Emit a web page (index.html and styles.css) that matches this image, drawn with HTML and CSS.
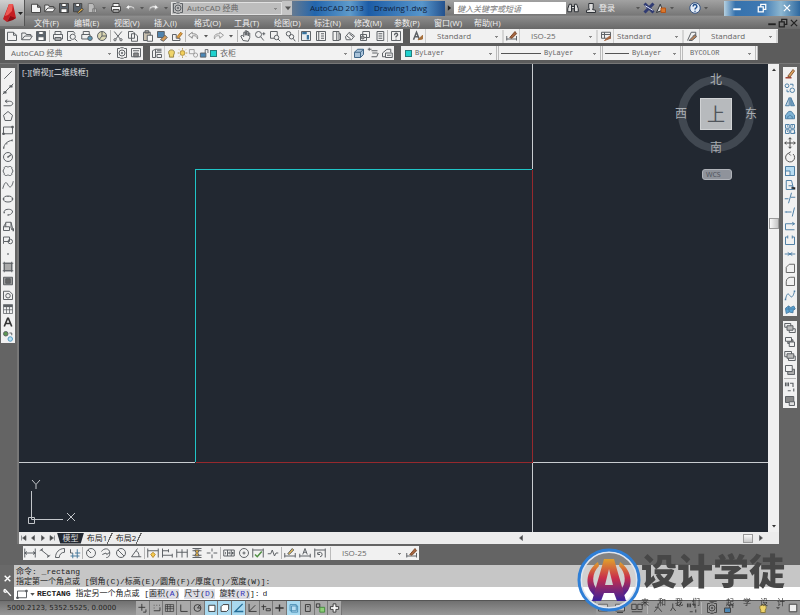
FILE: index.html
```html
<!DOCTYPE html>
<html lang="zh-CN">
<head>
    <meta charset="UTF-8">
    <meta name="viewport" content="width=device-width, initial-scale=1.0">
    <title>AutoCAD 2013 - Drawing1.dwg</title>
    <link rel="stylesheet" href="styles.css">
</head>
<body>
    <header class="app-header">
        <button class="app-button" aria-label="应用程序菜单">
            <svg viewBox="0 0 25 25">
                <path d="M3 18 L9 3 L13 3 L16 17 L11 19 L10 15 L7 21 Z" fill="#c41d22"/>
                <path d="M9 3 L13 3 L12 10 L8 14 L5 15 Z" fill="#ee5a55"/>
                <path d="M7 21 L10 15 L16 17 L13 19 Z" fill="#8e0d14"/>
                <path d="M18 11h5l-2.500 3z" fill="#222"/>
            </svg>
        </button>
        <div class="title-bar">
            <div class="tools quick" data-icons="new open save saveas sheet caret plot undo caret redo caret"></div>
            <div class="combo workspace-combo">
                <i data-icon="gear"></i>
                <select aria-label="工作空间"><option>AutoCAD 经典</option></select>
            </div>
            <button class="more" aria-label="自定义"><i data-icon="caret"></i></button>
            <h1><span>AutoCAD 2013</span><span>Drawing1.dwg</span></h1>
            <i class="expand" data-icon="play"></i>
            <input class="search" type="text" aria-label="搜索" placeholder="键入关键字或短语">
            <div class="tools account" data-icons="find user"></div>
            <button class="login">登录</button>
            <div class="tools info" data-icons="caret exchange share caret gap help caret"></div>
            <div class="window-buttons" data-icons="min restore close"></div>
        </div>
        <nav class="menu-bar">
            <a href="#">文件(F)</a>
            <a href="#">编辑(E)</a>
            <a href="#">视图(V)</a>
            <a href="#">插入(I)</a>
            <a href="#">格式(O)</a>
            <a href="#">工具(T)</a>
            <a href="#">绘图(D)</a>
            <a href="#">标注(N)</a>
            <a href="#">修改(M)</a>
            <a href="#">参数(P)</a>
            <a href="#">窗口(W)</a>
            <a href="#">帮助(H)</a>
            <div class="doc-buttons" data-icons="min restore close"></div>
        </nav>
    </header>

    <div class="toolbar-row">
        <div class="toolbar tools standard" data-icons="new open save | plot preview publish globe | cut copy paste match block | undo caret redo caret | pan zoom zoomwin zoomprev | props center palette sheets markup calc | help2"></div>
        <div class="toolbar styles">
            <i data-icon="textstyle"></i>
            <select class="wide" aria-label="文字样式"><option>Standard</option></select>
            <i data-icon="dimstyle"></i>
            <select class="wide" aria-label="标注样式"><option>ISO-25</option></select>
            <i data-icon="tablestyle"></i>
            <select aria-label="表格样式"><option>Standard</option></select>
            <i data-icon="leader"></i>
            <select class="wide" aria-label="多重引线样式"><option>Standard</option></select>
        </div>
    </div>

    <div class="toolbar-row">
        <div class="toolbar workspaces">
            <select aria-label="工作空间"><option>AutoCAD 经典</option></select>
            <div class="tools" data-icons="gear wsave"></div>
        </div>
        <div class="toolbar layers">
            <div class="tools" data-icons="layers"></div>
            <div class="combo">
                <i data-icon="bulb"></i><i data-icon="sun"></i><i data-icon="freeze"></i><i data-icon="lock"></i><b class="swatch"></b>
                <select aria-label="图层"><option>衣柜</option></select>
            </div>
            <div class="tools" data-icons="laycur layprev laystate"></div>
        </div>
        <div class="toolbar properties">
            <div class="combo color"><b class="swatch"></b><select aria-label="颜色"><option>ByLayer</option></select></div>
            <div class="combo linetype"><hr><select aria-label="线型"><option>ByLayer</option></select></div>
            <div class="combo weight"><hr><select aria-label="线宽"><option>ByLayer</option></select></div>
            <div class="combo plotstyle"><select aria-label="打印样式"><option>BYCOLOR</option></select></div>
        </div>
    </div>

    <main>
        <aside class="side-left">
            <div class="toolbar-v draw" data-icons="line xline pline polygon rect arc circle cloud spline ellipse earc insert mkblock point hatch gradient region table text addsel"></div>
        </aside>
        <section class="document">
            <div class="canvas">
                <svg class="drawing" viewBox="0 0 749 468" preserveAspectRatio="xMidYMid slice" shape-rendering="crispEdges" fill="none">
                    <path d="M513.500 0V105M513.500 399V468M0 398.500H176M514 398.500H749" stroke="#c9ccd0"/>
                    <path d="M513 105.500H176.500V398" stroke="#20c4c6"/>
                    <path d="M513.500 106V398.500H177" stroke="#96292d"/>
                </svg>
                <button class="view-label">[-][俯视][二维线框]</button>
                <div class="view-cube">
                    <span class="north">北</span>
                    <span class="west">西</span>
                    <button class="face">上</button>
                    <span class="east">东</span>
                    <span class="south">南</span>
                </div>
                <button class="wcs">WCS</button>
                <svg class="ucs" viewBox="0 0 50 50" fill="none" stroke="#c3c6ca">
                    <path d="M4.500 14V42.500H36M1.500 40.500h6v6h-6z"/>
                    <path d="M5 3l4 4.500l4-4.500M9 7.500V12M40 36l8 8M48 36l-8 8"/>
                </svg>
            </div>
            <div class="scroll-v"><i data-icon="up"></i><b></b><i data-icon="down"></i></div>
            <div class="tabs">
                <div class="tools" data-icons="first prev next last"></div>
                <button class="tab active">模型</button>
                <button class="tab">布局1</button>
                <button class="tab">布局2</button>
                <div class="scroll-h"><i data-icon="prev"></i><b></b><i data-icon="next"></i></div>
            </div>
        </section>
        <aside class="side-right">
            <div class="toolbar-v modify" data-icons="erase dup mirror offset array move rotate scale stretch trim extend breakpt break join chamfer fillet blend explode"></div>
            <div class="toolbar-v order" data-icons="front back above under | textfront hatchback"></div>
        </aside>
    </main>

    <div class="toolbar-row dim-row">
        <div class="toolbar dimension">
            <div class="tools" data-icons="dlin dalign darc dord | drad djog ddia dang | dquick dbase dcont dspace dbreak | dtol dcenter dinsp djogl | dedit dtedit dupd"></div>
            <select class="wide" aria-label="标注样式"><option>ISO-25</option></select>
            <div class="tools" data-icons="dimstyle"></div>
        </div>
    </div>

    <section class="command">
        <div class="command-handle" data-icons="close wrench"></div>
        <div class="command-body">
            <p>命令: _rectang</p>
            <p>指定第一个角点或 [倒角(C)/标高(E)/圆角(F)/厚度(T)/宽度(W)]:</p>
            <div class="command-line">
                <i data-icon="rect"></i><i data-icon="caret"></i>
                <label for="commandInput"><strong>RECTANG</strong> 指定另一个角点或 [<button>面积(<em>A</em>)</button> <button>尺寸(<em>D</em>)</button> <button>旋转(<em>R</em>)</button>]:</label>
                <input id="commandInput" type="text" value="d">
            </div>
        </div>
    </section>

    <footer>
        <span class="coords">5000.2123, 5352.5525, 0.0000</span>
        <div class="toggles" data-icons="infer snap grid ortho polar osnap osnap3d otrack ducs dyn lwt tpy qp sc am"></div>
        <div class="status-right" data-icons="model layout1 layout2 | annoscale annovis textfront | gear lock freeze bulb caret clean"></div>
    </footer>

    <div class="brand">
        <svg viewBox="0 0 64 64">
            <defs>
                <linearGradient id="brandFill" x1="0" y1="0" x2="0" y2="1">
                    <stop offset="0" stop-color="#e0a12c"/>
                    <stop offset=".45" stop-color="#c92f4b"/>
                    <stop offset="1" stop-color="#39209b"/>
                </linearGradient>
            </defs>
            <circle cx="32" cy="32" r="28" fill="#fff" fill-opacity=".2" stroke="#dfe5ef" stroke-width="2"/>
            <circle cx="32" cy="32" r="30" fill="none" stroke="#2f7fd6" stroke-width="3"/>
            <path d="M21 14C8 23 7 40 18 48L21 42C14 36 15 25 22 18ZM43 14C56 23 57 40 46 48L43 42C50 36 49 25 42 18Z" fill="url(#brandFill)"/>
            <path fill-rule="evenodd" d="M27 11H37L49 53H40L37 45H27L24 53H15ZM32 21L28 37H36Z" fill="url(#brandFill)"/>
        </svg>
        <div class="brand-text">
            <strong>设计学徒</strong>
            <p><span>来</span><span>和</span><span>我</span><span>们</span><span>一</span><span>起</span><span>学</span><span>设</span><span>计</span></p>
        </div>
    </div>

    <script src="icons.js"></script>
</body>
</html>
```

FILE: styles.css
```css
*, *::before, *::after {
    box-sizing: border-box;
}

body, html {
    margin: 0;
    padding: 0;
    height: 100%;
}

body {
    display: flex;
    flex-direction: column;
    background-color: #646464;
    color: #333;
    font: 8px/10px "Open Sans", "Noto Sans CJK SC", sans-serif;
    overflow: hidden;
}

button, select, input {
    margin: 0;
    padding: 0;
    border: none;
    border-radius: 0;
    background: none;
    color: inherit;
    font: inherit;
    outline: none;
}

svg {
    display: block;
}

i {
    display: flex;
    align-items: center;
    justify-content: center;
    flex: none;
    width: 12px;
}

i svg, .icon svg {
    width: 12px;
    height: 12px;
    fill: none;
    stroke: #5c6064;
    stroke-width: 1.3;
}

.icon {
    display: flex;
    align-items: center;
    justify-content: center;
    flex: none;
    width: 14px;
    height: 14px;
}

.icon-caret {
    width: 10px;
}

.icon-gap {
    width: 12px;
}

.icon-caret svg {
    width: 8px;
    height: 8px;
}

.tools {
    display: flex;
    align-items: center;
    justify-content: space-between;
}

.sep {
    flex: none;
    width: 1px;
    height: 12px;
    background-color: #b5b5b5;
}

/* Header */
.app-header {
    display: grid;
    grid-template-columns: 26px 1fr;
    grid-template-rows: 16px 13px;
    background: linear-gradient(#a2a2a2, #777 52%, #8d8d8d 56%, #686868);
}

.app-button {
    grid-row: 1 / 3;
    width: 25px;
    height: 26px;
    background: linear-gradient(#d0d0d0, #8a8a8a);
    border-right: 1px solid #555;
}

.app-button svg {
    width: 25px;
    height: 25px;
}

.title-bar {
    display: flex;
    align-items: center;
    min-width: 0;
    height: 16px;
}

.title-bar .quick {
    width: 145px;
    padding-left: 3px;
}

.quick svg {
    fill: #f4f4f4;
    stroke: #444;
}

.combo {
    display: flex;
    align-items: center;
    height: 14px;
    background-color: #f2f2f2;
}

.combo select {
    flex: 1;
    min-width: 0;
}

.workspace-combo {
    width: 111px;
    height: 13px;
    background-color: #bdbdbd;
    border: 1px solid #e0e0e0;
    color: #444;
}

select {
    appearance: none;
    height: 13px;
    padding-left: 3px;
    color: #666;
    background: linear-gradient(#888, #888) right 4px center / 3px 1px no-repeat,
                linear-gradient(#888, #888) right 5px top 7px / 1px 1px no-repeat;
}

.more {
    display: flex;
    align-items: center;
    width: 10px;
    height: 14px;
    background-color: #c4c4c4;
}

.title-bar h1 {
    flex: 1;
    display: flex;
    align-items: center;
    justify-content: center;
    gap: 10px;
    height: 15px;
    margin: 0;
    background: linear-gradient(90deg, #657a91, #2265ad 15%, #5f9bcb 38%, #1c5ca6 50%, #5796cc 85%, #23518e);
    color: #10213a;
    font-size: 8px;
    font-weight: 400;
    white-space: nowrap;
}

.expand {
    width: 9px;
}

.search {
    width: 112px;
    height: 12px;
    padding-left: 3px;
    background-color: #fff;
    font-style: italic;
}

.search::placeholder {
    color: #777;
}

.account {
    width: 32px;
}

.account svg, .info svg {
    stroke: #2b2f34;
}

.login {
    width: 18px;
    color: #eee;
}

.info {
    width: 94px;
    padding-left: 18px;
}

.title-bar .info .icon {
    width: 12px;
}

.title-bar .info .icon-caret {
    width: 8px;
}

.window-buttons {
    display: flex;
    align-items: center;
    justify-content: space-around;
    width: 76px;
    height: 15px;
    margin-left: 14px;
    background: linear-gradient(90deg, #b5d0e0, #3672ad 15%, #3e78b2 50%, #8db7d1 75%, #2e689f);
}

.window-buttons svg {
    width: 10px;
    stroke: #fff;
    stroke-width: 2;
}

.menu-bar {
    display: flex;
    align-items: center;
    height: 13px;
    padding-left: 8px;
}

.menu-bar a {
    width: 40px;
    color: #f1f1f1;
    text-decoration: none;
    white-space: nowrap;
}

.doc-buttons {
    display: flex;
    width: 34px;
    margin-left: auto;
}

.doc-buttons .icon {
    width: 11px;
}

.doc-buttons svg {
    width: 10px;
    height: 10px;
    stroke: #222;
    stroke-width: 2;
}

/* Toolbars */
.toolbar-row {
    display: flex;
    flex: none;
    gap: 7px;
    height: 17px;
    padding-left: 5px;
    background-color: #5c5c5c;
    align-items: flex-start;
}

.toolbar {
    display: flex;
    align-items: center;
    height: 14px;
    background-color: #f1f1f1;
}

.standard {
    width: 398px;
}

.styles {
    width: 368px;
}

.styles i {
    width: 16px;
    height: 14px;
    border-right: 1px solid #ccc;
}

.styles select {
    flex: 1;
    min-width: 0;
    border-right: 2px solid #d5d5d5;
}

select.wide {
    padding-left: 11px;
}

.workspaces {
    width: 138px;
}

.workspaces select {
    flex: 1;
    padding-left: 6px;
}

.layers {
    width: 244px;
}

.layers .combo {
    flex: 1;
    padding-left: 1px;
    border-left: 1px solid #ccc;
    border-right: 1px solid #ccc;
}

.layers .combo i {
    width: 11px;
}

.swatch {
    flex: none;
    width: 7px;
    height: 7px;
    background-color: #1fd2cf;
    border: 1px solid #257d7d;
}

.properties {
    width: 357px;
    font-family: "Liberation Mono", monospace;
    font-size: 7px;
}

.properties .combo {
    border-right: 3px double #bbb;
}

.properties hr {
    width: 40px;
    margin: 0 0 0 2px;
    border: none;
    border-top: 1px solid #555;
}

.properties .weight hr {
    width: 24px;
}

.color {
    width: 98px;
    padding-left: 4px;
}

.linetype {
    width: 104px;
}

.weight {
    width: 80px;
}

.plotstyle {
    flex: 1;
    padding-left: 4px;
}

/* Workspace */
main {
    flex: 1;
    display: flex;
    min-height: 0;
    border-top: 1px solid #777;
}

.side-left {
    width: 19px;
    padding: 4px 0 0 1px;
    border-right: 2px solid #777;
}

.toolbar-v {
    display: flex;
    flex-direction: column;
    align-items: center;
    justify-content: space-around;
    width: 14px;
    background-color: #f1f1f1;
}

.toolbar-v .icon {
    height: 13px;
}

.toolbar-v .sep {
    width: 12px;
    height: 1px;
}

.draw {
    height: 275px;
}

.side-right {
    display: flex;
    flex-direction: column;
    gap: 5px;
    width: 21px;
    padding: 3px 0 0 4px;
}

.modify {
    height: 249px;
}

.modify svg {
    stroke: #4d7ea5;
}

.order {
    height: 87px;
}

.document {
    flex: 1;
    display: grid;
    grid-template-columns: 1fr 11px;
    grid-template-rows: 1fr 12px;
    min-width: 0;
}

.canvas {
    position: relative;
    min-height: 0;
    background-color: #222831;
    overflow: hidden;
}

.drawing {
    width: 100%;
    height: 100%;
}

.view-label {
    position: absolute;
    top: 3px;
    left: 3px;
    color: #e0e2e5;
}

.view-cube {
    position: absolute;
    top: 9px;
    right: 11px;
    display: grid;
    grid-template-columns: 20px 42px 20px;
    grid-template-rows: 20px 42px 20px;
    place-items: center;
    color: #a9adb2;
    font-size: 12px;
    line-height: 14px;
}

/* compass ring behind the letters */
.view-cube::before {
    content: "";
    position: absolute;
    top: 3px;
    left: 3px;
    width: 76px;
    height: 76px;
    border: 8px solid #414851;
    border-radius: 50%;
}

.view-cube span, .face {
    position: relative;
}

.north, .south {
    grid-column: 2;
}

.north {
    align-self: start;
}

.south {
    align-self: end;
}

.west {
    grid-column: 1;
    justify-self: start;
}

.east {
    justify-self: end;
}

.face {
    width: 32px;
    height: 32px;
    background-color: #b7babd;
    border: 1px solid #d0d2d4;
    color: #50555b;
    font-size: 18px;
    line-height: 24px;
}

.wcs {
    position: absolute;
    top: 105px;
    right: 36px;
    width: 30px;
    height: 11px;
    padding-left: 3px;
    background-color: #8f939b;
    border: 1px solid #b0b3b9;
    border-radius: 3px;
    color: #4b5059;
    font-size: 7px;
    line-height: 8px;
    text-align: left;
}

.ucs {
    position: absolute;
    left: 8px;
    bottom: 5px;
    width: 50px;
    height: 50px;
}

.scroll-v {
    display: grid;
    grid-template-rows: 12px 1fr 12px;
    justify-items: center;
    background-color: #f0f0f0;
}

.scroll-v b {
    width: 10px;
    height: 11px;
    margin-top: 142px;
    background: linear-gradient(90deg, #fafafa, #c5c5c5);
    border: 1px solid #999;
}

.scroll-v i svg, .tabs i svg {
    width: 8px;
    height: 8px;
}

.tabs {
    grid-column: 1 / 3;
    display: flex;
    align-items: center;
    background-color: #ececec;
}

.tabs .tools {
    width: 38px;
}

.tabs .tools .icon {
    width: 9px;
}

.tabs .tools svg {
    width: 8px;
    height: 8px;
}

.tab {
    width: 29px;
    height: 11px;
    padding-right: 3px;
    color: #222;
    line-height: 10px;
    background: linear-gradient(115deg, transparent 45%, #666 46%, #666 56%, transparent 57%) right / 7px 11px no-repeat;
}

.tab.active {
    width: 27px;
    padding: 0;
    background: #222831;
    color: #ddd;
    clip-path: polygon(0 0, 100% 0, 88% 100%, 12% 100%);
}

.scroll-h {
    display: flex;
    flex: 1;
    align-items: center;
    height: 12px;
    margin-left: 371px;
    padding-right: 10px;
}

.scroll-h i {
    width: 16px;
}

.scroll-h b {
    width: 10px;
    height: 9px;
    margin-left: auto;
    background: linear-gradient(#fafafa, #c5c5c5);
    border: 1px solid #999;
}

/* Dimension toolbar */
.dim-row {
    height: 21px;
    padding: 2px 0 0 23px;
    background-color: #646464;
}

.dimension {
    width: 396px;
}

.dimension .tools:first-child {
    width: 304px;
}

.dimension select {
    flex: 1;
    margin-left: 3px;
    border-left: 1px solid #bbb;
}

/* Command window */
.command {
    flex: none;
    display: flex;
    height: 36px;
    border-bottom: 1px solid #555;
    font: 8px/10px "Liberation Mono", "Noto Sans CJK SC", monospace;
}

.command-handle {
    display: flex;
    flex-direction: column;
    justify-content: space-around;
    width: 14px;
    padding-top: 6px;
    background-color: #696969;
}

.command-handle svg {
    width: 9px;
    height: 9px;
    stroke: #fff;
    stroke-width: 2.5;
}

.command-body {
    flex: 1;
    padding-top: 2px;
    background-color: #c6c6c6;
    color: #222;
}

.command-body p {
    height: 10px;
    margin: 0;
    padding-left: 2px;
    white-space: nowrap;
}

.command-line {
    display: flex;
    align-items: center;
    height: 13px;
    padding-left: 2px;
    background-color: #fff;
    white-space: nowrap;
}

.command-line i:nth-child(2) {
    width: 9px;
}

.command-line button {
    background-color: #dcdce4;
}

.command-line em {
    color: #3434b8;
    font-style: normal;
}

.command-line input {
    flex: 1;
    margin-left: 3px;
}

/* Status bar */
footer {
    flex: none;
    display: flex;
    align-items: center;
    height: 14px;
    padding-left: 7px;
    background: linear-gradient(#707070, #989898);
}

.coords {
    width: 129px;
    color: #1d1d1d;
    font: 7px/10px "DejaVu Sans", sans-serif;
}

.toggles {
    display: flex;
    width: 206px;
    background-color: #a9a9a9;
}

.toggles .icon {
    flex: 1;
    border-right: 1px solid #777;
}

.toggles svg {
    width: 11px;
    stroke: #333;
}

.toggles .icon-osnap, .toggles .icon-osnap3d, .toggles .icon-otrack, .toggles .icon-tpy {
    background-color: #a9d9ef;
}

.status-right {
    display: flex;
    align-items: center;
    justify-content: space-between;
    width: 204px;
    margin-left: auto;
    background-color: #999;
}

.status-right svg {
    stroke: #444;
}

/* Watermark over the lower right corner */
.brand {
    position: fixed;
    right: 15px;
    bottom: 3px;
    display: flex;
    align-items: center;
    color: #474747;
    pointer-events: none;
}

.brand svg {
    width: 64px;
    height: 64px;
}

.brand strong {
    display: block;
    font-size: 36px;
    font-weight: 900;
    line-height: 38px;
}

.brand p {
    display: flex;
    justify-content: space-between;
    margin: 6px 0 0;
    color: #333;
}
```

FILE: icons.js
```javascript
// Icon shapes, all drawn on a 16x16 grid
var icons = {
    new: '<path d="M2 3h8l4 4v7H2z M10 3v4h4"/>',
    open: '<path d="M1 13V4h5l1 2h6v2M1 13l4-5h10l-3 5z"/>',
    save: '<path d="M2 2h12v12H2z" fill="#59636d"/><path d="M5 2h6v4H5zM4 9h8v5H4z" fill="#fff"/>',
    saveas: '<path d="M2 2h11v11H2z" fill="#59636d"/><path d="M5 2h5v4H5z" fill="#fff"/><path d="M7 14l6-6 2 2-6 5z" fill="#e2ae45"/>',
    sheet: '<path d="M3 2h6l2 3v9H3zM9 9h5v5H9z" fill="#bbb" stroke="#777"/>',
    caret: '<path d="M4 6h8l-4 5z" fill="#555" stroke="none"/>',
    plot: '<path d="M4 6V2h8v4M2 6h12v6H2zM4 10h8v4H4z"/>',
    undo: '<path d="M7 3L2 7l5 4V8c4-1 6 0 7 4 1-5-1-7-7-7z" stroke="#888"/>',
    redo: '<path d="M9 3l5 4-5 4V8c-4-1-6 0-7 4-1-5 1-7 7-7z" stroke="#999"/>',
    gear: '<path d="M2 2h3l1-1h4l1 1h3v12h-3l-1 1H6l-1-1H2z"/><circle cx="8" cy="8" r="4"/><circle cx="8" cy="8" r="1"/>',
    play: '<path d="M5 3l6 5-6 5z" fill="#222" stroke="none"/>',
    find: '<path d="M3 3h3v10H1V9zM10 3h3l2 6v4h-5zM6 6h4v3H6z" fill="#ddd"/>',
    user: '<path d="M5 2h6v6l-1 2 4 1v3H2v-3l4-1-1-2z" fill="#ddd"/>',
    exchange: '<path d="M2 2l12 12M14 2L2 14" stroke="#303b72" stroke-width="4"/><path d="M3 5l10 6" stroke="#dfe6ff"/>',
    share: '<path d="M2 14l5-11 3 8z" fill="#ddd"/><path d="M8 8h6v6H8z" fill="#d9772c" stroke="#b45316"/>',
    help: '<circle cx="8" cy="8" r="7" fill="#e5edf8" stroke="#33517f"/><path d="M5.500 6c0-4 5-3 5 0 0 2-2.500 2-2.500 4M8 11.500v1.500" stroke="#24508b" stroke-width="2"/>',
    min: '<path d="M2 10h12" stroke-width="3"/>',
    restore: '<path d="M6 5V2h8v8h-4M2 6h8v8H2z"/>',
    close: '<path d="M3 3l10 10M13 3L3 13"/>',
    preview: '<path d="M2 2h8l2 3M2 2v12h5"/><circle cx="9" cy="9" r="3.500"/><path d="M12 12l3 3"/>',
    publish: '<path d="M3 6V2h8v4M1 6h11v6H1z"/><circle cx="12" cy="11" r="3" fill="#5a98b5"/>',
    globe: '<circle cx="8" cy="8" r="6" fill="#dcd7b2"/><path d="M8 2v6h6M8 8l-4 5"/>',
    cut: '<path d="M3 2l8 10M13 2L5 12"/><circle cx="4" cy="13" r="1.500"/><circle cx="12" cy="13" r="1.500"/>',
    copy: '<path d="M2 2h6l2 2v7H2zM6 5h5l3 3v7H6z" fill="#f1f1f1"/>',
    paste: '<path d="M2 3h9v11H2zM4 1h5v3H4z" fill="#c8bfae"/><path d="M7 7h7v8H7z" fill="#f5f5f5"/>',
    match: '<path d="M2 2h9v8H2z" fill="#4f83ad"/><path d="M6 13l6-6 3 3-5 5z" fill="#d59b57"/>',
    block: '<path d="M2 6h5v5h5v3H2z"/><path d="M8 9l5-6 2 2-5 6z" fill="#e5a444" stroke="#a5702a"/>',
    pan: '<path d="M4 14L1 8l2-1 2 2V3h2v4-6h2v6-5h2v6-4h2v6l-2 5z"/>',
    zoom: '<circle cx="6" cy="6" r="4"/><path d="M9 9l4 5M11 5h4M13 3v4"/>',
    zoomwin: '<path d="M2 2h9v5M2 2v9h5"/><circle cx="10" cy="10" r="3"/><path d="M12 12l3 3"/>',
    zoomprev: '<circle cx="6" cy="5" r="3"/><circle cx="10" cy="9" r="3"/><path d="M12 11l3 4"/>',
    props: '<path d="M2 2h12v12H2z" fill="#e8edf0"/><path d="M3 4h6M9 8h3M9 11h3" stroke="#37739d" stroke-width="3"/>',
    center: '<path d="M2 2h12v12H2zM5 2v12M8 5h4M8 8h4M8 11h4"/>',
    palette: '<path d="M4 2h8v12H4zM9 2v12M12 5h2v8h-2"/>',
    sheets: '<path d="M2 9l5-6 7 5-4 5H3zM4 8l5 4M7 5l5 4"/>',
    markup: '<path d="M5 2h9v8H5zM2 6h8v8H2z"/><circle cx="5" cy="10" r="2" fill="#999"/>',
    calc: '<path d="M4 2h9v12H4zM6 5h5M6 8h5M6 11h5"/>',
    help2: '<path d="M2 2h12v12H2z"/><path d="M6 7c0-4 5-3 4 0L8 9v1M8 11.500v1" stroke-width="1.800"/>',
    textstyle: '<path d="M2 13L6 3l4 10M4 9h5" stroke-width="2"/><path d="M8 13l6-6v5z" fill="#a56e3a" stroke="#a56e3a"/>',
    dimstyle: '<path d="M1 8v6M14 8v6M1 12h13"/><path d="M5 10l7-8 2 3-6 6z" fill="#a56540" stroke="#7a4a2c"/>',
    tablestyle: '<path d="M2 3h12v8H2zM2 6h12M6 3v8"/><path d="M6 14l7-6 1 3z" fill="#a56540" stroke="#a56540"/>',
    leader: '<path d="M2 14L7 3h6v5H9"/><path d="M4 14l8-8 2 3-6 5z" fill="#b98258"/>',
    wsave: '<path d="M2 2h12v11H2z"/><path d="M4 5h8M5 8h6v5H5z" fill="#888"/>',
    layers: '<path d="M2 5l4-2v11H2zM6 3h8M6 7h8M8 10h6v4H8zM8 5h6"/>',
    bulb: '<path d="M5 11c-6-10 12-10 6 0v3H5z" fill="#efd469" stroke="#8a7a3c"/>',
    sun: '<circle cx="8" cy="8" r="3.500" fill="#f2cf58" stroke="#a7893a"/><path d="M8 1v2M8 13v2M1 8h2M13 8h2M3 3l1 1M12 12l1 1M13 3l-1 1M3 13l1-1" stroke="#a7893a"/>',
    freeze: '<path d="M2 3h7v6H2z" stroke="#999"/><circle cx="11" cy="11" r="3" stroke="#999"/>',
    lock: '<path d="M2 8h8v6H2z" fill="#4c87b5"/><path d="M9 8V3h4v5"/>',
    laycur: '<path d="M2 7l4-4h8v7l-4 4H2zM2 7h8v7M10 7l4-4" fill="#a9c3da" stroke="#3d6486"/>',
    layprev: '<path d="M1 3h5M3 1v4M6 5h8M7 8h7M6 13h7l2-5"/>',
    laystate: '<path d="M2 8l6-5h5v4M6 8h9v6H6zM2 8v5h4M8 11h5"/>',
    line: '<path d="M3 13L13 3"/>',
    xline: '<path d="M1 15L15 1"/><path d="M3 12h2v1H3zM11 4h2v1h-2z" stroke-width="2"/>',
    pline: '<path d="M2 13h9c5-1 4-6-1-6H5M7 5L4 7l3 2"/>',
    polygon: '<path d="M8 2l6 5-2 7H4L2 7z"/>',
    rect: '<path d="M2 4h12v9H2z"/><path d="M13 3h2v2h-2zM1 12h2v2H1z" fill="#444"/>',
    arc: '<path d="M2 14C3 8 7 4 14 3"/><path d="M2 13h1M6 7h1M13 3h1" stroke-width="3"/>',
    circle: '<circle cx="8" cy="8" r="6"/><path d="M8 8l4-3M7 8h2" stroke-width="1.800"/>',
    cloud: '<path d="M8 3c2-2 6-1 5 2 2 2 2 4 0 6 1 3-3 4-5 2-2 2-6 1-5-2-2-2-2-4 0-6-1-3 3-4 5-2z"/>',
    spline: '<path d="M1 13C4 2 6 4 8 8s5 4 7-5"/>',
    ellipse: '<ellipse cx="8" cy="8" rx="6" ry="4"/><path d="M1 8h2M13 8h2M8 4v1" stroke-width="2"/>',
    earc: '<path d="M3 9c-2-6 12-6 11-1-1 3-4 4-6 4M2 9h2M8 11v2"/>',
    insert: '<path d="M2 9h8v5H2zM5 9V3h7v8M5 4L2 9M12 3l2 8"/><path d="M12 12h3v3" stroke-width="2"/>',
    mkblock: '<path d="M2 4h8v6H2zM2 10v3"/><circle cx="11" cy="10" r="3"/>',
    point: '<path d="M7 8h2" stroke-width="2"/>',
    hatch: '<path d="M3 3h10v10H3zM1 3h14M1 13h14M3 1v14M13 1v14"/><path d="M4 4h8v8H4z" fill="#aaa" stroke="none"/>',
    gradient: '<path d="M2 3h12v10H2z" fill="#999"/><path d="M5 5h6v6H5z" fill="#666"/>',
    region: '<path d="M2 3h8l4 4v7H2z"/><circle cx="8" cy="9" r="3"/>',
    table: '<path d="M2 2h12v12H2zM6 5v9M10 5v9M2 9h12" stroke-width="1"/><path d="M2 4h12" stroke-width="3"/>',
    text: '<path d="M3 14L7.500 3h1L13 14M5 10h6" stroke-width="2.200" stroke="#333"/>',
    addsel: '<circle cx="5" cy="5" r="3" fill="#5b9751"/><circle cx="11" cy="12" r="3" fill="#b6dcee" stroke="#529ac2"/><path d="M10 4h3v3"/>',
    erase: '<path d="M2 13h8" stroke="#a24638" stroke-width="2"/><path d="M5 11l7-9 2 2-6 8z" fill="#dfa55c" stroke="#87583a"/>',
    dup: '<circle cx="4" cy="5" r="2.500"/><circle cx="11" cy="11" r="3"/><path d="M8 3h4v3M4 10v3h3"/>',
    mirror: '<path d="M7 2v11H2z" fill="#c4d4e0"/><path d="M9 2v11h5z" fill="#6f9dbf"/>',
    offset: '<path d="M2 13V8c3-1 2-5 6-5s3 4 6 5v5z" fill="#7fb3d5"/><path d="M5 13v-3c2 0 2-2 3-2s1 2 3 2v3"/>',
    array: '<path d="M2 2h5v5H2zM9 2h5v5H9zM2 9h5v5H2zM9 9h5v5H9z"/><path d="M4 4h1M11 4h1M4 11h1M13 13h2" stroke-width="2"/>',
    move: '<path d="M8 1v14M1 8h14M6 3l2-2 2 2M6 13l2 2 2-2M3 6L1 8l2 2M13 6l2 2-2 2" stroke="#444"/>',
    rotate: '<path d="M6 3a6 6 0 1 0 6 1M9 1L6 3l3 3" stroke="#555"/>',
    scale: '<path d="M2 2h12v12H2z" fill="#b7dcf2"/><path d="M2 8h6v6H2z" fill="#f1f1f1"/>',
    stretch: '<path d="M3 2h7l3 12H3zM6 9h5v4"/><path d="M10 12h4v2" stroke="#222" stroke-width="2"/>',
    trim: '<path d="M1 9h5M9 7h6M10 1L6 15"/>',
    extend: '<path d="M1 8h9M14 2l-3 12M3 8h1"/>',
    breakpt: '<path d="M2 5h12M2 5v8h12M11 3l3 2-3 2"/>',
    break: '<path d="M5 4H2v10h12V4h-3M5 2v4M11 2v4"/>',
    join: '<path d="M1 8h14M5 6l3 2-3 2M11 6L8 8l3 2"/>',
    chamfer: '<path d="M3 14V7l4-4h7v11z" stroke="#666"/>',
    fillet: '<path d="M3 14V9c0-4 3-6 6-6h5v11z" stroke="#666"/>',
    blend: '<path d="M2 14c2-10 4-8 6-5s4 2 6-6"/><path d="M1 14h2M13 3h2" stroke-width="2"/>',
    explode: '<path d="M2 7l4-3 3 2 4-2 2 4-3 2v3l-5-1-4 2z" fill="#5aa6d6"/><path d="M6 4l1 8M2 8h12"/>',
    front: '<path d="M1 2h8v5H1zM7 9h8v5H7z"/><path d="M4 5h8v6H4z" fill="#bbb"/>',
    back: '<path d="M5 5h7v5H5z" fill="#999"/><path d="M2 2h8v5H2zM7 8h7v6H7z" fill="#f1f1f1"/>',
    above: '<path d="M1 2h9v7H1zM6 8h9v6H6z"/><path d="M4 5h9v6H4z" fill="#bbb"/>',
    under: '<path d="M5 7h9v7H5z" fill="#aaa"/><path d="M2 2h9v8H2z" fill="#f1f1f1"/>',
    textfront: '<path d="M2 2v5M4 2v5M6 2v5M8 3h4v5M5 13h4M13 10v4" stroke-width="1.500"/>',
    hatchback: '<path d="M2 2h11v8H2z" fill="#888"/><path d="M7 9h7v5H7z" fill="#ddd"/>',
    up: '<path d="M8 5l4 5H4z" fill="#333" stroke="none"/>',
    down: '<path d="M8 11L4 6h8z" fill="#333" stroke="none"/>',
    first: '<path d="M3 3v10"/><path d="M12 3v10L5 8z" fill="#444"/>',
    prev: '<path d="M11 3v10L5 8z" fill="#444"/>',
    next: '<path d="M5 3v10l6-5z" fill="#444"/>',
    last: '<path d="M13 3v10"/><path d="M4 3v10l7-5z" fill="#444"/>',
    dlin: '<path d="M1 2v12M15 2v12M1 8h14M4 6L1 8l3 2M12 6l3 2-3 2"/>',
    dalign: '<path d="M1 5l4-3M11 14l4-3M3 4l10 8"/><path d="M3 4h2M11 12h2" stroke-width="2"/>',
    darc: '<path d="M2 14C2 7 7 2 14 2M7 14c0-4 3-7 7-7M2 14h5M14 2v5"/>',
    dord: '<path d="M2 12h12M5 8v7M11 3v12M8 8h7" stroke="#47799c"/><path d="M2 3v5h3"/>',
    drad: '<circle cx="8" cy="8" r="6"/><path d="M8 8L4 4"/>',
    djog: '<path d="M2 6c3-5 11-5 11 2s-5 6-5 6M3 10l5-2 1 2 4-3"/>',
    ddia: '<circle cx="8" cy="8" r="6"/><path d="M4 4l8 8"/>',
    dang: '<path d="M10 2L2 13h13M8 5c3 1 4 4 4 8"/>',
    dquick: '<path d="M1 2v12M15 2v12M1 5h14"/><path d="M8 7l3 3-3 4-3-4z" fill="#f4cb4c" stroke="#b98a2f"/>',
    dbase: '<path d="M2 2v12M2 5h8M2 11h13M10 3v4M15 9v5"/>',
    dcont: '<path d="M1 3v11M8 3v11M15 3v11M1 7h14"/>',
    dspace: '<path d="M2 2h12M2 14h12M2 5h12M2 11h12"/><path d="M5 4h6l-2 4 2 4H5l2-4z" fill="#dfab42"/>',
    dbreak: '<path d="M1 8h5M10 8h5M8 2v4M8 10v5"/>',
    dtol: '<path d="M1 4h14v8H1zM6 4v8M11 4v8"/><circle cx="8.500" cy="8" r="1"/><path d="M3 8h1M12 8h2" stroke-width="3"/>',
    dcenter: '<circle cx="8" cy="8" r="6"/><path d="M8 6v4M6 8h4"/>',
    dinsp: '<path d="M1 2v12M15 2v12M1 4h14"/><path d="M4 10l3 3 6-7" stroke="#509043" stroke-width="2"/>',
    djogl: '<path d="M1 9h4l2-5 3 8 2-4h3"/>',
    dedit: '<path d="M1 8v6M15 8v6M1 12h14"/><path d="M5 9l6-7 2 2-6 6z" fill="#e8be57"/>',
    dtedit: '<path d="M1 9v5M15 9v5M1 12h14M5 10l3-8 3 8M6 7h4"/>',
    dupd: '<path d="M1 2v12M15 2v12M1 4h14"/><path d="M5 9a3 3 0 1 1 3 4M5 7v3h3"/>',
    wrench: '<path d="M3 2l4 4 7 8M3 2c-3 5 1 7 4 4"/>',
    infer: '<path d="M7 2v10M2 7h10M13 10v4h-4"/>',
    snap: '<path d="M4 4h1M8 4h1M12 4h1M4 8h1M4 12h9V7"/>',
    grid: '<path d="M2 3h12v10H2zM2 6h12M2 9h12M5 3v10M9 3v10" stroke-width="1"/>',
    ortho: '<path d="M4 3v10h10"/>',
    polar: '<circle cx="8" cy="8" r="5"/><path d="M8 8h5M8 8l4-5"/>',
    osnap: '<path d="M4 4h9v9H4z" fill="#fff"/>',
    osnap3d: '<path d="M3 6l3-3h8v7l-3 3H3z" fill="#fff"/>',
    otrack: '<path d="M14 2L3 13h12" stroke="#256e98" stroke-width="2"/>',
    ducs: '<path d="M3 2v11h11M3 13L12 4"/>',
    dyn: '<path d="M5 3v8M2 6h7M9 9h6v3H9z"/>',
    lwt: '<path d="M2 8h12M8 3v10" stroke-width="2"/>',
    tpy: '<path d="M3 3h9v9H3zM5 5h9v9H5z" fill="#b9def2" stroke="#478bb2"/>',
    qp: '<path d="M5 3h7v10H5zM7 6h3"/>',
    sc: '<path d="M2 2h5v5H2z"/><path d="M7 7h7v7H7z" fill="#8fce79" stroke="#3f8938"/>',
    am: '<path d="M6 2h4v4h4v4h-4v4H6v-4H2V6h4z" fill="#f6f6f6"/>',
    model: '<path d="M2 3h12v9H2z" fill="#bbb"/>',
    layout1: '<path d="M2 3h12v9H2zM4 14h8" fill="#bbb"/>',
    layout2: '<path d="M1 3h6v7H1zM9 3h6v7H9zM1 13h14"/>',
    annoscale: '<path d="M8 2v5L3 13M8 7l5 6M8 7H4"/>',
    annovis: '<path d="M5 2v5L2 12M5 7l4 5M10 3l5 3"/>',
    clean: '<path d="M3 3h10v10H3z" fill="#eee"/>',
    gap: ''
};

function drawIcon(name) {
    return '<svg viewBox="0 0 16 16" aria-hidden="true">' + icons[name] + '</svg>';
}

// Single icons placed beside other controls
document.querySelectorAll('[data-icon]').forEach(function(el) {
    el.innerHTML = drawIcon(el.dataset.icon);
});

// Groups of tool buttons, "|" is a separator
document.querySelectorAll('[data-icons]').forEach(function(group) {
    group.dataset.icons.split(' ').forEach(function(name) {
        var item;
        if (name === '|' || name === 'gap') {
            item = document.createElement('span');
            item.className = name === '|' ? 'sep' : 'icon icon-gap';
        } else {
            item = document.createElement('button');
            item.className = 'icon icon-' + name;
            item.setAttribute('aria-label', name);
            item.innerHTML = drawIcon(name);
        }
        group.appendChild(item);
    });
});
```
